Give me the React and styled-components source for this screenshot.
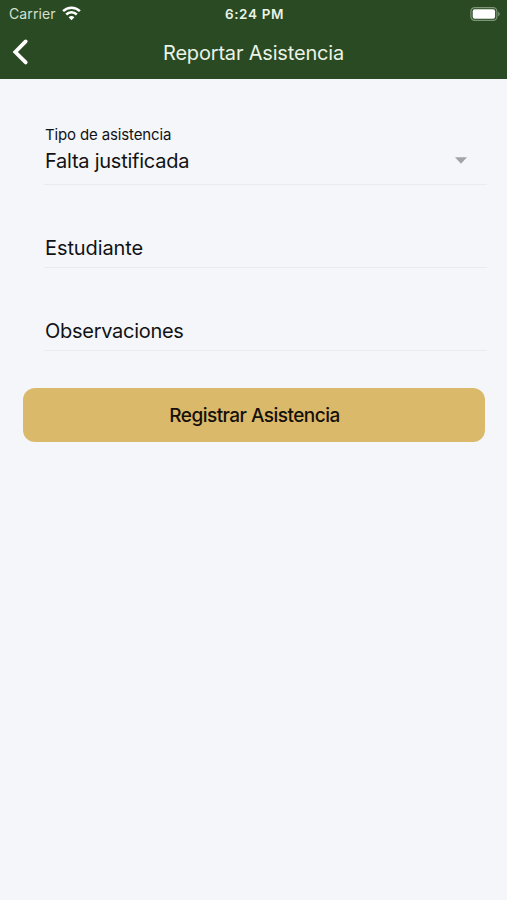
import React from 'react'
import styled, { createGlobalStyle } from 'styled-components'

const GlobalStyle = createGlobalStyle`
  body {
    margin: 0;
    background: #f4f6fa;
    font-family: Inter, 'Liberation Sans', sans-serif;
  }
  * {
    box-sizing: border-box;
  }
`

const Screen = styled.div`
  min-height: 900px;
  background: #f4f6fa;
  color: #121214;
`

const Header = styled.header`
  height: 79px;
  background: #2a4a23;
  color: #e9f3e6;
`

const StatusBar = styled.div`
  display: grid;
  grid-template-columns: 1fr auto 1fr;
  align-items: center;
  height: 27px;
  padding: 0 7px 0 9px;
`

const Carrier = styled.div`
  display: flex;
  align-items: center;
  gap: 6px;
  font-size: 14px;
  letter-spacing: 0.12px;
  color: #d3e0cf;
`

const Time = styled.div`
  font-size: 13.5px;
  font-weight: 600;
  letter-spacing: 0.65px;
`

const Battery = styled.svg`
  justify-self: end;
`

const NavBar = styled.div`
  display: grid;
  grid-template-columns: 40px 1fr 40px;
  align-items: center;
  height: 50px;
`

const BackButton = styled.button`
  display: flex;
  padding: 0 0 0 11px;
  border: none;
  background: transparent;
`

const Title = styled.h1`
  margin: 0;
  padding-top: 1px;
  font-size: 20px;
  font-weight: 400;
  line-height: 26px;
  text-align: center;
  letter-spacing: -0.18px;
`

const Form = styled.form`
  display: flex;
  flex-direction: column;
  padding: 0 22px 0 23px;
`

const Field = styled.div`
  display: flex;
  flex-direction: column;
  justify-content: flex-end;
  height: ${props => props.$height}px;
  margin: 0 -2px 0 21px;
  padding: 0 0 ${props => props.$bottom}px 1px;
  border-bottom: 1px solid #e9ebef;
`

const Label = styled.label`
  margin-bottom: 3px;
  font-size: 15px;
  line-height: 20px;
  letter-spacing: -0.14px;
`

const Value = styled.div`
  display: flex;
  align-items: center;
  justify-content: space-between;
  padding-right: 20px;
  font-size: 20px;
  line-height: 26px;
  letter-spacing: ${props => props.$spacing}px;
`

const CaretIcon = styled.svg`
  margin-bottom: 2px;
`

const Submit = styled.button`
  height: 54px;
  margin-top: 36.5px;
  padding: 1px 0 0 1px;
  border: none;
  border-radius: 12px;
  background: #dbb96b;
  color: #14100a;
  font-family: inherit;
  font-size: 19px;
  font-weight: 500;
  letter-spacing: -0.53px;
`

const WifiIcon = () => (
  <svg width="19" height="15" viewBox="0 0 19 15" fill="none" stroke="#fff" strokeWidth="2.5">
    <path d="M1.1 5.2C5.8 0.6 13.2 0.6 17.9 5.2" />
    <path d="M4.2 8.5C7.2 5.6 11.8 5.6 14.8 8.5" />
    <path d="M6.6 11.2C8.3 9.7 10.7 9.7 12.4 11.2L9.5 14.2Z" fill="#fff" stroke="none" />
  </svg>
)

const BatteryIcon = () => (
  <Battery width="30" height="14" viewBox="0 0 30 14">
    <rect x="0.9" y="0.6" width="26" height="12.8" rx="3.8" fill="none" stroke="#7f9679" strokeWidth="1.2" />
    <rect x="2.7" y="2.3" width="22.4" height="9.4" rx="2" fill="#fff" />
    <path d="M28.2 4.8C30.2 5.7 30.2 8.3 28.2 9.2Z" fill="#7f9679" />
  </Battery>
)

const BackIcon = () => (
  <svg width="18" height="28" viewBox="0 0 18 28" fill="none" stroke="#fff" strokeWidth="3.8" strokeLinecap="round" strokeLinejoin="miter">
    <path d="M14.7 3.4L4.3 14L14.7 24.4" />
  </svg>
)

const Caret = () => (
  <CaretIcon width="12" height="7" viewBox="0 0 12 7">
    <path d="M0 0.3H12L6 6.7Z" fill="#a2a4a8" />
  </CaretIcon>
)

const App = () => {
  return (
    <>
      <GlobalStyle />
      <Screen>
        <Header>
          <StatusBar>
            <Carrier>Carrier <WifiIcon /></Carrier>
            <Time>6:24 PM</Time>
            <BatteryIcon />
          </StatusBar>
          <NavBar>
            <BackButton type="button" aria-label="Volver"><BackIcon /></BackButton>
            <Title>Reportar Asistencia</Title>
          </NavBar>
        </Header>
        <Form>
          <Field $height={106} $bottom={10}>
            <Label>Tipo de asistencia</Label>
            <Value $spacing={-0.25}>Falta justificada <Caret /></Value>
          </Field>
          <Field $height={83} $bottom={6}>
            <Value $spacing={-0.1}>Estudiante</Value>
          </Field>
          <Field $height={83} $bottom={6}>
            <Value $spacing={-0.28}>Observaciones</Value>
          </Field>
          <Submit type="button">Registrar Asistencia</Submit>
        </Form>
      </Screen>
    </>
  )
}

export default App
